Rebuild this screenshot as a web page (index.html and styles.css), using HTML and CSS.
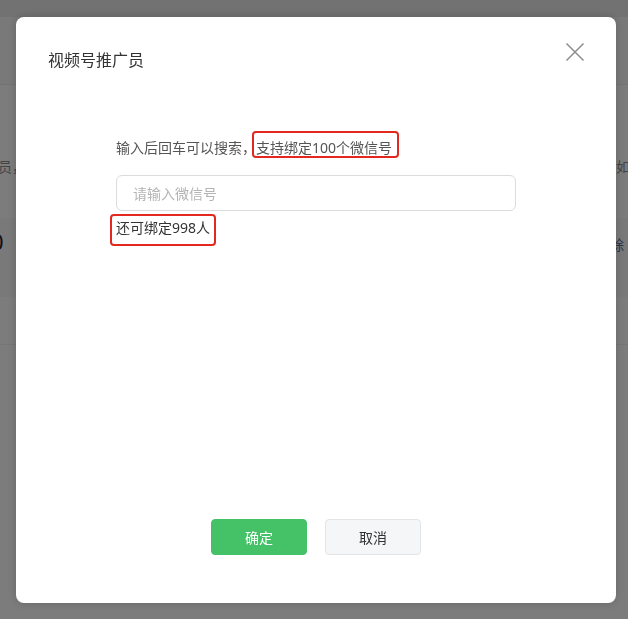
FILE: index.html
```html
<!DOCTYPE html>
<html lang="zh-CN">
<head>
<meta charset="utf-8">
<title>视频号推广员</title>
<link rel="stylesheet" href="styles.css">
</head>
<body>
<div class="page">
  <div class="topbar"></div>
  <div class="sec sec-a"></div>
  <div class="sec sec-b">
    <div class="clip clip-l"><span class="bg-text shift-l">员，</span></div>
    <div class="clip clip-r"><span class="bg-text">如何</span></div>
  </div>
  <div class="sec sec-c">
    <div class="clip clip-l num-cell"><span class="bg-num">0</span></div>
    <div class="clip clip-r link-cell"><span class="bg-link">除</span></div>
  </div>
  <div class="sec sec-d"></div>
  <div class="sec sec-e"></div>
</div>
<div class="mask"></div>
<div class="dialog">
  <div class="dialog-head">
    <div class="dialog-title">视频号推广员</div>
    <button class="close" aria-label="关闭">
      <svg width="20" height="20" viewBox="0 0 20 20"><path d="M1.5 1.5 L18.5 18.5 M18.5 1.5 L1.5 18.5" stroke="#8c8c8c" stroke-width="1.5" fill="none"/></svg>
    </button>
  </div>
  <div class="dialog-body">
    <div class="hint">输入后回车可以搜索，<span class="mark mark-a">支持绑定100个微信号</span></div>
    <input class="field" type="text" placeholder="请输入微信号">
    <div class="remain"><span class="mark mark-b">还可绑定998人</span></div>
  </div>
  <div class="dialog-foot">
    <button class="btn btn-primary">确定</button>
    <button class="btn btn-default">取消</button>
  </div>
</div>
</body>
</html>
```
FILE: styles.css
```css
* { box-sizing: border-box; }
html, body {
  margin: 0;
  padding: 0;
  width: 628px;
  height: 619px;
  overflow: hidden;
  font-family: "Noto Sans", "Noto Sans CJK SC", sans-serif;
  background: #f8f8f8;
}
.page { width: 628px; }
.topbar { height: 17px; background: #e4e4e4; }
.sec { display: flex; justify-content: space-between; align-items: flex-start; }
.sec-a { height: 68px; background: #f2f2f2; border-bottom: 1px solid #e6e6e6; }
.sec-b { height: 133px; background: #f9f9f9; padding-top: 72px; }
.sec-c { height: 79px; background: #f3f3f3; }
.sec-d { height: 48px; background: #f8f8f8; border-bottom: 1px solid #ececec; }
.sec-e { height: 274px; background: #f8f8f8; }
.clip { overflow: hidden; white-space: nowrap; }
.clip-l { width: 16px; }
.clip-r { width: 12px; }
.bg-text { display: block; font-size: 14px; line-height: 20px; color: #888; }
.shift-l { margin-left: -2px; }
.num-cell { margin-top: 9px; }
.link-cell { margin-top: 17px; }
.bg-num { display: block; font-size: 22px; line-height: 28px; color: #222; margin-left: -9px; }
.bg-link { display: block; font-size: 14px; line-height: 20px; color: #576b95; margin-left: -6px; }
.mask {
  position: fixed;
  inset: 0;
  background: rgba(0, 0, 0, 0.5);
}
.dialog {
  position: fixed;
  left: 16px;
  top: 17px;
  width: 600px;
  height: 586px;
  background: #fff;
  border-radius: 8px;
  box-shadow: 0 0 10px rgba(0, 0, 0, 0.18);
  display: flex;
  flex-direction: column;
}
.dialog-head { padding: 31px 32px 0; position: relative; }
.dialog-title { font-size: 16px; line-height: 24px; color: #333; }
.close {
  position: absolute;
  top: 25px;
  right: 31px;
  width: 20px;
  height: 20px;
  padding: 0;
  border: 0;
  background: none;
  display: block;
}
.close svg { display: block; }
.dialog-body { flex: 1; padding: 65px 100px 0; }
.hint { font-size: 14px; line-height: 22px; color: #555; }
.mark { position: relative; display: inline-block; }
.mark::after {
  content: "";
  position: absolute;
  border: 2px solid #e3291f;
  border-radius: 4px;
}
.mark-a::after { left: -4px; right: -7px; top: -6px; bottom: 1px; }
.field {
  display: block;
  width: 400px;
  height: 36px;
  margin-top: 16px;
  padding: 0 16px;
  border: 1px solid #dcdcdc;
  border-radius: 6px;
  font-family: inherit;
  font-size: 14px;
  color: #333;
  outline: none;
}
.field::placeholder { color: #b4b4b4; }
.remain { margin-top: 6px; font-size: 14px; line-height: 22px; color: #333; }
.mark-b::after { left: -6px; right: -6px; top: -3px; bottom: -7px; }
.dialog-foot {
  display: flex;
  justify-content: center;
  gap: 18px;
  padding-bottom: 48px;
}
.btn {
  width: 96px;
  height: 36px;
  border-radius: 4px;
  font-family: inherit;
  font-size: 14px;
  padding: 0;
}
.btn-primary { background: #45c267; border: 1px solid #45c267; color: #fff; }
.btn-default { background: #f5f6f7; border: 1px solid #e3e4e6; color: #333; }
```
